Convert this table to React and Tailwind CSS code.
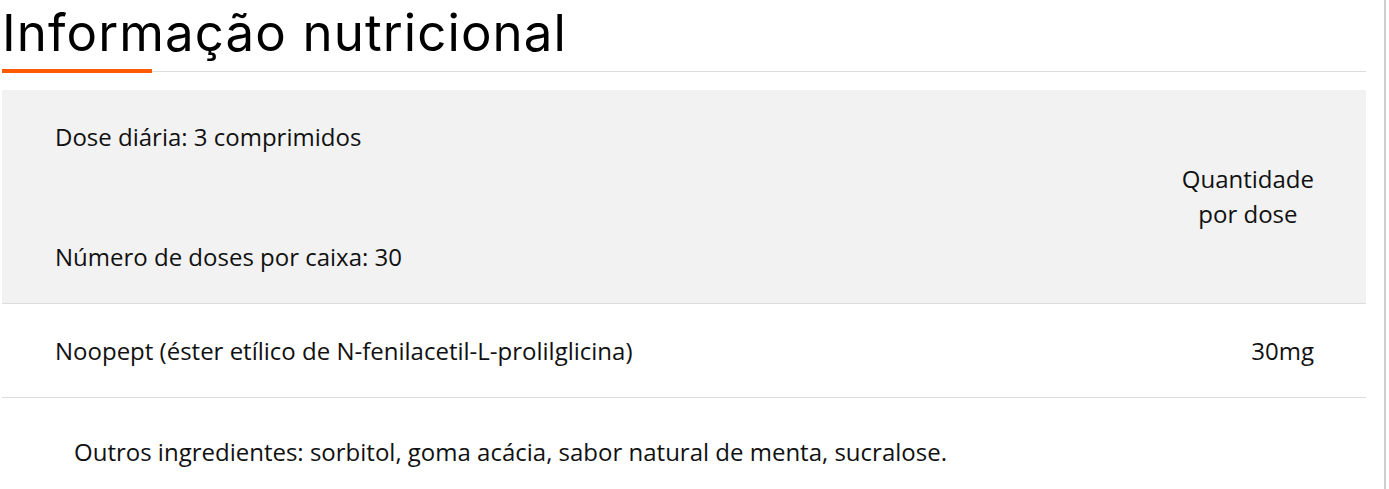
export default function App() {
  return (
    <div className="flex w-[1389px] h-[489px] bg-white overflow-hidden" style={{ fontFamily: '"Open Sans", sans-serif' }}>
      <div className="ml-[2px] w-[1364px] flex flex-col">
        <div className="relative h-[72px] border-b border-[#dcdcdc]">
          <h1 className="pt-[3px] text-[51px] leading-[60px] text-black tracking-[1.1px]" style={{ fontFamily: 'Inter, sans-serif' }}>
            Informação nutricional
          </h1>
          <div className="absolute left-0 bottom-[-2px] w-[150px] h-[4px] bg-[#ff5a00]" />
        </div>
        <div className="mt-[18px] bg-[#f2f2f2] h-[214px] border-b border-[#dcdcdc] flex text-[24px] text-[#111]">
          <div className="flex-1 pl-[53px] flex flex-col justify-between pt-[31px] pb-[30px] leading-[32px]">
            <div>Dose diária: 3 comprimidos</div>
            <div>Número de doses por caixa: 30</div>
          </div>
          <div className="pr-[52px] pb-[2px] flex items-center text-center leading-[35px]">
            <div>Quantidade<br />por dose</div>
          </div>
        </div>
        <div className="h-[94px] border-b border-[#dcdcdc] flex items-center justify-between pl-[53px] pr-[52px] text-[24px] text-[#111] leading-[32px]">
          <div>Noopept (éster etílico de N-fenilacetil-L-prolilglicina)</div>
          <div>30mg</div>
        </div>
        <div className="pt-[38px] pl-[72px] text-[24px] text-[#111] leading-[32px]">
          Outros ingredientes: sorbitol, goma acácia, sabor natural de menta, sucralose.
        </div>
      </div>
      <div className="ml-[18px] w-[2px] h-full bg-[#cfcfcf]" />
    </div>
  );
}
